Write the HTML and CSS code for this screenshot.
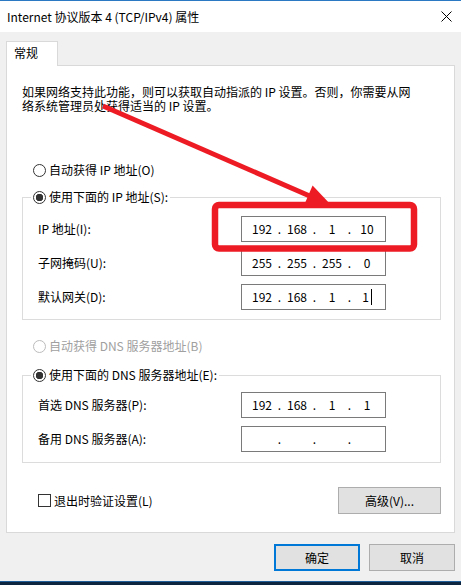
FILE: index.html
```html
<!DOCTYPE html>
<html lang="zh-CN">
<head>
  <meta charset="UTF-8" />
  <meta name="viewport" content="width=device-width, initial-scale=1.0"/>
  <title>Internet 协议版本 4 (TCP/IPv4) 属性</title>
  <link rel="stylesheet" href="styles.css">
</head>
<body>
  <div class="window">
    <div class="titlebar">
      <span class="title">Internet 协议版本 4 (TCP/IPv4) 属性</span>
      <svg class="close" width="11" height="11" viewBox="0 0 11 11">
        <path d="M0.5 0.5 L10.5 10.5 M10.5 0.5 L0.5 10.5" stroke="#000" stroke-width="1" fill="none"/>
      </svg>
    </div>

    <div class="dialog">
      <div class="tab">常规</div>
      <div class="panel">
        <p class="desc">如果网络支持此功能，则可以获取自动指派的 IP 设置。否则，你需要从网<br>络系统管理员处获得适当的 IP 设置。</p>

        <div class="radio first">自动获得 IP 地址(O)</div>
        <fieldset class="group">
          <legend><span class="radio checked">使用下面的 IP 地址(S):</span></legend>
          <div class="row">
            <span class="label">IP 地址(I):</span>
            <div class="ip"><span class="seg">192</span><span class="dot">.</span><span class="seg">168</span><span class="dot">.</span><span class="seg">1</span><span class="dot">.</span><span class="seg">10</span></div>
          </div>
          <div class="row">
            <span class="label">子网掩码(U):</span>
            <div class="ip"><span class="seg">255</span><span class="dot">.</span><span class="seg">255</span><span class="dot">.</span><span class="seg">255</span><span class="dot">.</span><span class="seg">0</span></div>
          </div>
          <div class="row">
            <span class="label">默认网关(D):</span>
            <div class="ip"><span class="seg">192</span><span class="dot">.</span><span class="seg">168</span><span class="dot">.</span><span class="seg">1</span><span class="dot">.</span><span class="seg">1<span class="caret"></span></span></div>
          </div>
        </fieldset>

        <div class="radio disabled dns-auto">自动获得 DNS 服务器地址(B)</div>
        <fieldset class="group dns">
          <legend><span class="radio checked">使用下面的 DNS 服务器地址(E):</span></legend>
          <div class="row">
            <span class="label">首选 DNS 服务器(P):</span>
            <div class="ip"><span class="seg">192</span><span class="dot">.</span><span class="seg">168</span><span class="dot">.</span><span class="seg">1</span><span class="dot">.</span><span class="seg">1</span></div>
          </div>
          <div class="row">
            <span class="label">备用 DNS 服务器(A):</span>
            <div class="ip"><span class="seg"></span><span class="dot">.</span><span class="seg"></span><span class="dot">.</span><span class="seg"></span><span class="dot">.</span><span class="seg"></span></div>
          </div>
        </fieldset>

        <div class="options">
          <span class="check">退出时验证设置(L)</span>
          <button class="btn advanced">高级(V)...</button>
        </div>
      </div>

      <div class="footer">
        <button class="btn default">确定</button>
        <button class="btn">取消</button>
      </div>
    </div>

    <div class="taskbar"></div>

    <!-- red annotation drawn over the dialog -->
    <svg class="markup" width="461" height="585" viewBox="0 0 461 585">
      <rect x="215" y="204" width="199" height="43.5" rx="4" fill="none" stroke="#ed1c24" stroke-width="6.5"/>
      <line x1="103" y1="105" x2="312" y2="196" stroke="#ed1c24" stroke-width="5"/>
      <polygon points="332,205 303.8,204.7 312.6,184.5" fill="#ed1c24"/>
    </svg>
  </div>
</body>
</html>
```

FILE: styles.css
```css
body {
  margin: 0;
  background: #f0f0f0;
  color: #000;
  font-family: "Noto Sans CJK SC", sans-serif;
  font-size: 12px;
}
.window {
  position: relative;
  height: 585px;
  display: flex;
  flex-direction: column;
  border-top: 1px solid #2b79c2;
  box-sizing: border-box;
  overflow: hidden;
}
.titlebar {
  height: 31px;
  flex: none;
  background: #fff;
  display: flex;
  align-items: center;
  justify-content: space-between;
  padding: 0 9px 0 7px;
}
.title {
  line-height: 16px;
}
.dialog {
  flex: 1;
  padding: 9px 6px 0 6px;
}
.tab {
  position: relative;
  z-index: 1;
  width: 52px;
  height: 25px;
  box-sizing: border-box;
  margin-bottom: -1px;
  padding: 3px 0 0 7px;
  line-height: 16px;
  background: #fff;
  border: 1px solid #d9d9d9;
  border-bottom: none;
}
.panel {
  height: 468px;
  box-sizing: border-box;
  background: #fff;
  border: 1px solid #d9d9d9;
}
.desc {
  margin: 0;
  padding: 19px 0 0 15px;
  line-height: 14px;
}
.radio {
  display: flex;
  align-items: center;
  height: 16px;
  line-height: 16px;
}
.radio::before {
  content: "";
  width: 13px;
  height: 13px;
  box-sizing: border-box;
  border: 1px solid #333;
  border-radius: 50%;
  margin-right: 3px;
  background: #fff;
}
.radio.checked::before {
  background: radial-gradient(circle, #333 0 3.5px, #fff 4px);
}
.radio.disabled {
  color: #a0a0a0;
}
.radio.disabled::before {
  border-color: #bcbcbc;
}
.radio.first {
  margin: 49px 0 0 26px;
}
.radio.dns-auto {
  margin: 18px 0 0 26px;
}
.group {
  margin: 11px 13px 0 15px;
  padding: 11px 0 9px 15px;
  border: 1px solid #dcdcdc;
  min-width: 0;
}
.group legend {
  padding: 0 2px;
  margin-left: -7px;
}
.group.dns {
  margin-top: 13px;
  padding-top: 9px;
  padding-bottom: 10px;
}
.row {
  display: flex;
  align-items: center;
  height: 26px;
}
.row + .row {
  margin-top: 8px;
}
.label {
  width: 203px;
  line-height: 16px;
}
.ip {
  width: 145px;
  height: 26px;
  box-sizing: border-box;
  border: 1px solid #7a7a7a;
  display: flex;
  align-items: center;
  padding-left: 7px;
  line-height: 16px;
}
.seg {
  width: 26px;
  text-align: center;
  display: flex;
  justify-content: center;
  align-items: center;
}
.dot {
  width: 9px;
  text-align: center;
}
.caret {
  display: inline-block;
  width: 1px;
  height: 16px;
  background: #000;
  margin-left: 2px;
}
.options {
  display: flex;
  align-items: center;
  justify-content: space-between;
  margin-top: 24px;
  padding: 0 13px 0 31px;
}
.check {
  display: flex;
  align-items: center;
  line-height: 16px;
}
.check::before {
  content: "";
  width: 13px;
  height: 13px;
  box-sizing: border-box;
  border: 1px solid #333;
  margin-right: 3px;
}
.btn {
  height: 27px;
  box-sizing: border-box;
  background: #e1e1e1;
  border: 1px solid #adadad;
  font-family: inherit;
  font-size: 12px;
  color: #000;
  padding: 0;
}
.btn.advanced {
  width: 103px;
}
.footer {
  display: flex;
  justify-content: flex-end;
  gap: 9px;
  margin-top: 11px;
}
.footer .btn {
  width: 86px;
}
.btn.default {
  border: 2px solid #0078d7;
}
.taskbar {
  flex: none;
  height: 4px;
  box-sizing: border-box;
  background: #0e2540;
  border-top: 1px solid #1f5e99;
}
.markup {
  position: absolute;
  top: 0;
  left: 0;
  pointer-events: none;
}
```
